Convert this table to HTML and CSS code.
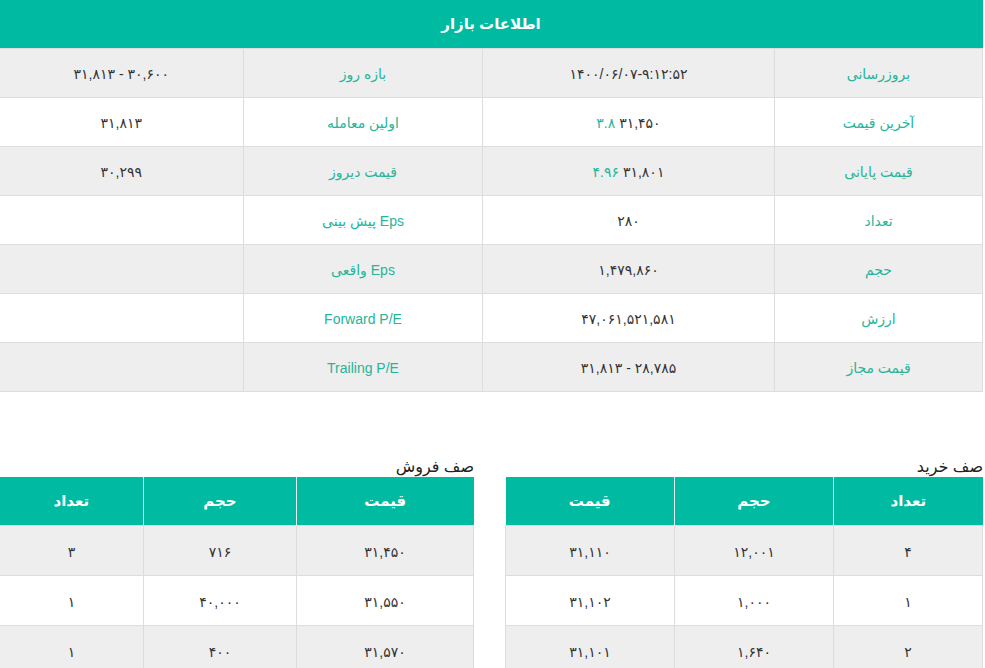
FILE: index.html
```html
<!DOCTYPE html>
<html lang="fa" dir="rtl">
<head>
<meta charset="utf-8">
<link rel="stylesheet" href="styles.css">
</head>
<body>
<div class="page">
  <table class="market">
    <colgroup>
      <col class="c1"><col class="c2"><col class="c3"><col class="c4">
    </colgroup>
    <thead>
      <tr><th colspan="4">اطلاعات بازار</th></tr>
    </thead>
    <tbody>
      <tr>
        <td class="lbl">بروزرسانی</td>
        <td>۱۴۰۰/۰۶/۰۷-۹:۱۲:۵۲</td>
        <td class="lbl">بازه روز</td>
        <td>۳۰,۶۰۰ - ۳۱,۸۱۳</td>
      </tr>
      <tr>
        <td class="lbl">آخرین قیمت</td>
        <td><span class="num">۳۱,۴۵۰</span> <span class="chg">۳.۸</span></td>
        <td class="lbl">اولین معامله</td>
        <td>۳۱,۸۱۳</td>
      </tr>
      <tr>
        <td class="lbl">قیمت پایانی</td>
        <td><span class="num">۳۱,۸۰۱</span> <span class="chg">۴.۹۶</span></td>
        <td class="lbl">قیمت دیروز</td>
        <td>۳۰,۲۹۹</td>
      </tr>
      <tr>
        <td class="lbl">تعداد</td>
        <td>۲۸۰</td>
        <td class="lbl">Eps پیش بینی</td>
        <td></td>
      </tr>
      <tr>
        <td class="lbl">حجم</td>
        <td>۱,۴۷۹,۸۶۰</td>
        <td class="lbl">Eps واقعی</td>
        <td></td>
      </tr>
      <tr>
        <td class="lbl">ارزش</td>
        <td>۴۷,۰۶۱,۵۲۱,۵۸۱</td>
        <td class="lbl">Forward P/E</td>
        <td></td>
      </tr>
      <tr>
        <td class="lbl">قیمت مجاز</td>
        <td>۲۸,۷۸۵ - ۳۱,۸۱۳</td>
        <td class="lbl">Trailing P/E</td>
        <td></td>
      </tr>
    </tbody>
  </table>

  <div class="queues">
    <section class="queue buy">
      <div class="caption">صف خرید</div>
      <table class="qtable">
        <colgroup><col class="b1"><col class="b2"><col class="b3"></colgroup>
        <thead><tr><th>تعداد</th><th>حجم</th><th>قیمت</th></tr></thead>
        <tbody>
          <tr><td>۴</td><td>۱۲,۰۰۱</td><td>۳۱,۱۱۰</td></tr>
          <tr><td>۱</td><td>۱,۰۰۰</td><td>۳۱,۱۰۲</td></tr>
          <tr><td>۲</td><td>۱,۶۴۰</td><td>۳۱,۱۰۱</td></tr>
        </tbody>
      </table>
    </section>
    <section class="queue sell">
      <div class="caption">صف فروش</div>
      <table class="qtable">
        <colgroup><col class="s1"><col class="s2"><col class="s3"></colgroup>
        <thead><tr><th>قیمت</th><th>حجم</th><th>تعداد</th></tr></thead>
        <tbody>
          <tr><td>۳۱,۴۵۰</td><td>۷۱۶</td><td>۳</td></tr>
          <tr><td>۳۱,۵۵۰</td><td>۴۰,۰۰۰</td><td>۱</td></tr>
          <tr><td>۳۱,۵۷۰</td><td>۴۰۰</td><td>۱</td></tr>
        </tbody>
      </table>
    </section>
  </div>
</div>
</body>
</html>
```

FILE: styles.css
```css
html, body {
  margin: 0;
  padding: 0;
  background: #fff;
}
body {
  font-family: "Liberation Sans", "DejaVu Sans", sans-serif;
  color: #333;
  direction: rtl;
}
.page {
  width: 983px;
  margin-left: 0;
  margin-right: auto;
}
table {
  border-collapse: collapse;
  table-layout: fixed;
  width: 100%;
}
.market .c1 { width: 208px; }
.market .c2 { width: 292px; }
.market .c3 { width: 239px; }
.market .c4 { width: 244px; }

.market th {
  background: #00bba1;
  color: #fff;
  height: 48px;
  padding: 0;
  font-size: 15px;
  font-weight: bold;
  text-align: center;
}
.market td {
  height: 46px;
  padding: 2px 0 0 0;
  border: 1px solid #dddddd;
  text-align: center;
  font-size: 14px;
  color: #333;
}
.market tbody tr:nth-child(odd) td { background: #eeeeee; }
.market tbody tr:nth-child(even) td { background: #ffffff; }
.market tr td:last-child { border-left: none; }
.market .lbl { color: #26b59a; font-size: 14px; }
.num, .chg { display: inline-block; }
.chg { color: #26b59a; }

.queues {
  display: flex;
  flex-direction: row;
  justify-content: space-between;
  margin-top: 65px;
}
.queue.buy { width: 477px; }
.queue.sell { width: 474px; }
.caption {
  font-size: 16px;
  color: #222;
  height: 20px;
  line-height: 20px;
}
.qtable th {
  background: #00bba1;
  color: #fff;
  height: 48px;
  padding: 0;
  font-size: 15px;
  font-weight: bold;
  border-left: 1px solid #e4f7f3;
  text-align: center;
}
.qtable th:last-child { border-left: none; }
.qtable td {
  height: 47px;
  padding: 2px 0 0 0;
  border: 1px solid #dddddd;
  text-align: center;
  font-size: 14px;
}
.qtable tbody tr:nth-child(odd) td { background: #eeeeee; }
.qtable tbody tr:nth-child(even) td { background: #ffffff; }
.buy .b1 { width: 149px; }
.buy .b2 { width: 159px; }
.buy .b3 { width: 169px; }
.sell .s1 { width: 177px; }
.sell .s2 { width: 153px; }
.sell .s3 { width: 144px; }
```
